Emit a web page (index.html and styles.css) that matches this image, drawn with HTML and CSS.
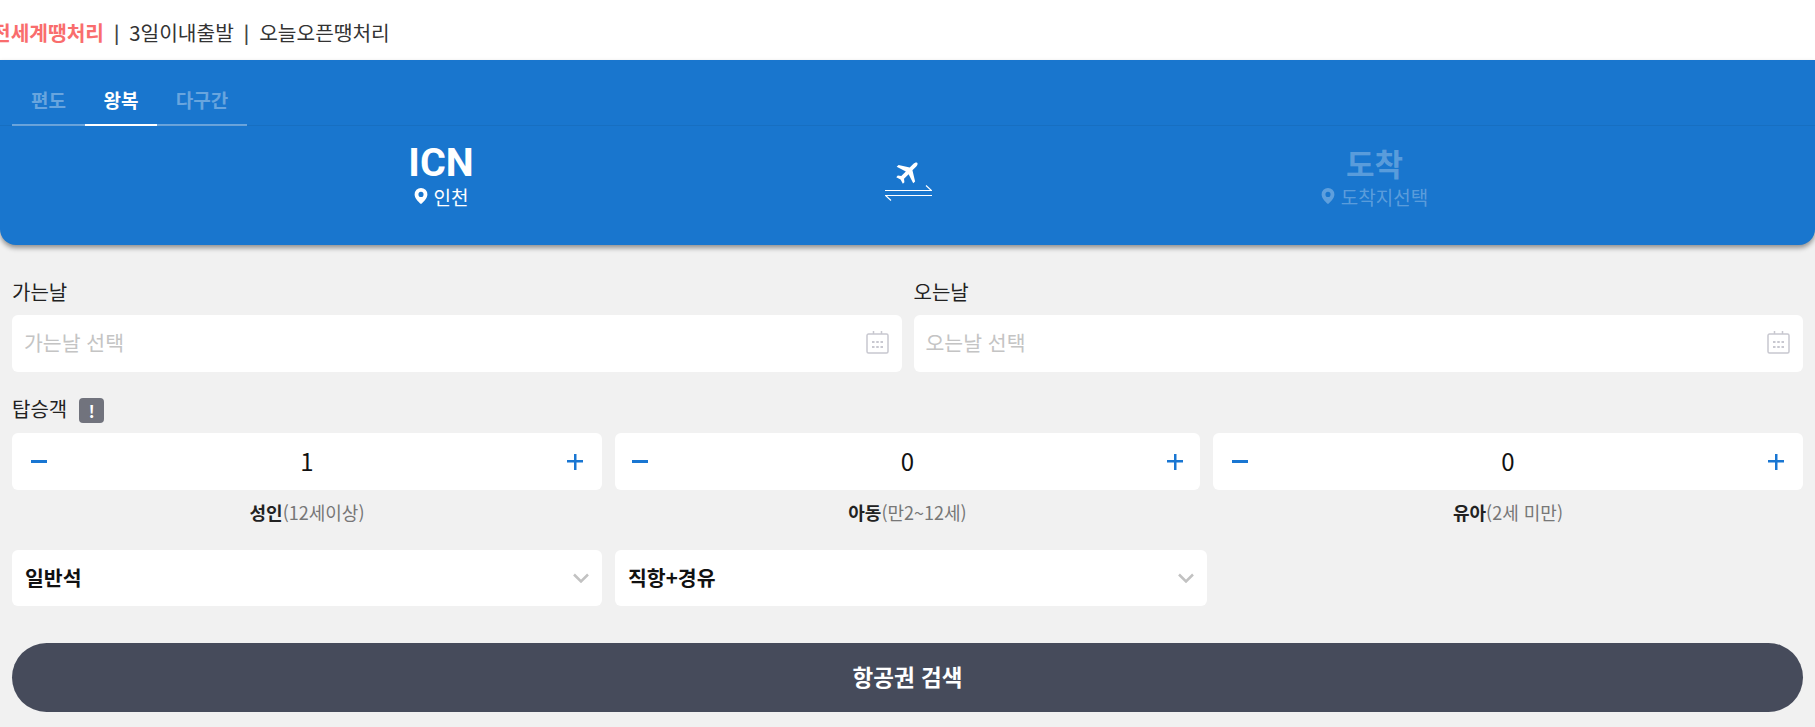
FILE: index.html
```html
<!DOCTYPE html>
<html lang="ko">
<head>
  <meta charset="UTF-8">
  <title>항공권 검색</title>
  <link rel="stylesheet" href="styles.css">
</head>
<body>
  <div class="top-links">
    <a class="hot">전세계땡처리</a>
    <span class="sep">|</span>
    <a>3일이내출발</a>
    <span class="sep">|</span>
    <a>오늘오픈땡처리</a>
  </div>

  <div class="route-panel">
    <div class="tabs">
      <div class="tab tab-oneway">편도</div>
      <div class="tab tab-round active">왕복</div>
      <div class="tab tab-multi">다구간</div>
    </div>
    <div class="route">
      <div class="place">
        <div class="code">ICN</div>
        <div class="city">
          <svg class="pin" viewBox="0 0 12 15"><path fill-rule="evenodd" d="M6 0a6 6 0 0 1 6 6c0 3.400-3.400 6.800-6 9-2.600-2.200-6-5.600-6-9a6 6 0 0 1 6-6zm0 3.600a2.400 2.400 0 1 0 0 4.800 2.400 2.400 0 0 0 0-4.800z"/></svg>
          인천
        </div>
      </div>
      <div class="swap">
        <svg class="plane" viewBox="-12 -12 24 24"><path transform="rotate(45)" d="M0-12c1.200 0 1.800 1.500 1.800 3v5l9 5.500V4l-9-3v6l2.500 2v2L0 9.700-4.300 11V9l2.500-2V1l-9 3V1.500l9-5.500V-9c0-1.500.6-3 1.800-3z"/></svg>
        <svg class="arrows" viewBox="0 0 47 16"><path d="M0 5.500h46.500L41 0.500M47 10.500H0.500L6 15.500"/></svg>
      </div>
      <div class="place empty">
        <div class="code">도착</div>
        <div class="city">
          <svg class="pin" viewBox="0 0 12 15"><path fill-rule="evenodd" d="M6 0a6 6 0 0 1 6 6c0 3.400-3.400 6.800-6 9-2.600-2.200-6-5.600-6-9a6 6 0 0 1 6-6zm0 3.600a2.400 2.400 0 1 0 0 4.800 2.400 2.400 0 0 0 0-4.800z"/></svg>
          도착지선택
        </div>
      </div>
    </div>
  </div>

  <div class="form">
    <div class="dates">
      <div class="date-col">
        <div class="field-label">가는날</div>
        <div class="box date-box">
          <span class="placeholder">가는날 선택</span>
          <svg class="calendar" viewBox="0 0 23 23"><path d="M1 4.500a1.500 1.500 0 0 1 1.500-1.500h18a1.500 1.500 0 0 1 1.500 1.500v16a1.500 1.500 0 0 1-1.500 1.500h-18a1.500 1.500 0 0 1-1.500-1.500zM7.500 0v3M15.500 0v3"/><path class="dots" d="M6 10h2.500v2H6zM10.250 10h2.500v2h-2.500zM14.500 10h2.500v2h-2.500zM6 15h2.500v2H6zM10.250 15h2.500v2h-2.500zM14.500 15h2.500v2h-2.500z"/></svg>
        </div>
      </div>
      <div class="date-col">
        <div class="field-label">오는날</div>
        <div class="box date-box">
          <span class="placeholder">오는날 선택</span>
          <svg class="calendar" viewBox="0 0 23 23"><path d="M1 4.500a1.500 1.500 0 0 1 1.500-1.500h18a1.500 1.500 0 0 1 1.500 1.500v16a1.500 1.500 0 0 1-1.500 1.500h-18a1.500 1.500 0 0 1-1.500-1.500zM7.500 0v3M15.500 0v3"/><path class="dots" d="M6 10h2.500v2H6zM10.250 10h2.500v2h-2.500zM14.500 10h2.500v2h-2.500zM6 15h2.500v2H6zM10.250 15h2.500v2h-2.500zM14.500 15h2.500v2h-2.500z"/></svg>
        </div>
      </div>
    </div>

    <div class="pax-title">
      <span class="field-label">탑승객</span>
      <span class="notice">!</span>
    </div>

    <div class="pax-row">
      <div class="pax">
        <div class="box stepper">
          <span class="minus"></span>
          <span class="count">1</span>
          <span class="plus"></span>
        </div>
        <div class="pax-label"><b>성인</b>(12세이상)</div>
      </div>
      <div class="pax pax-mid">
        <div class="box stepper">
          <span class="minus"></span>
          <span class="count">0</span>
          <span class="plus"></span>
        </div>
        <div class="pax-label"><b>아동</b>(만2~12세)</div>
      </div>
      <div class="pax">
        <div class="box stepper">
          <span class="minus"></span>
          <span class="count">0</span>
          <span class="plus"></span>
        </div>
        <div class="pax-label"><b>유아</b>(2세 미만)</div>
      </div>
    </div>

    <div class="select-row">
      <div class="box select">
        <span class="select-text">일반석</span>
        <svg class="chevron" viewBox="0 0 16 10"><path d="M1 1.500l7 7 7-7"/></svg>
      </div>
      <div class="box select select-wide">
        <span class="select-text">직항+경유</span>
        <svg class="chevron" viewBox="0 0 16 10"><path d="M1 1.500l7 7 7-7"/></svg>
      </div>
    </div>

    <button class="search-btn">항공권 검색</button>
  </div>
</body>
</html>
```

FILE: styles.css
```css
* {
  box-sizing: border-box;
}

html, body {
  height: 727px;
  overflow: hidden;
}

body {
  margin: 0;
  background: #f1f1f1;
  color: #222;
  font-family: "Noto Sans CJK KR", "Noto Sans", sans-serif;
}

.top-links {
  height: 60px;
  background: #fff;
  display: flex;
  align-items: center;
  gap: 10px;
  padding-top: 3px;
  margin-left: -8px;
  font-size: 20.300px;
  color: #333;
}

.top-links .hot {
  color: #f96d6d;
  font-weight: 700;
}

.top-links .sep {
  font-size: 18px;
  font-weight: 700;
  color: #444;
}

.route-panel {
  height: 185px;
  background: #1976ce;
  border-radius: 0 0 16px 16px;
  box-shadow: 0 3px 5px rgba(0,0,0,0.4);
  padding-top: 17px;
}

.tabs {
  display: flex;
  height: 49px;
  padding-left: 12px;
  border-bottom: 1px solid rgba(0,0,0,0.06);
}

.tab {
  height: 49px;
  border-bottom: 2px solid rgba(255,255,255,0.35);
  font-size: 19px;
  font-weight: 700;
  line-height: 45px;
  text-align: center;
  color: rgba(255,255,255,0.35);
}

.tab-oneway { width: 73px; }
.tab-round { width: 72px; }
.tab-multi { width: 90px; }

.tab.active {
  color: #fff;
  border-bottom-color: #fff;
}

.route {
  display: grid;
  grid-template-columns: 858px 76px 857px;
  padding: 0 12px;
}

.place {
  display: flex;
  flex-direction: column;
  align-items: center;
  color: #fff;
  padding-top: 16px;
}

.place.empty {
  color: rgba(255,255,255,0.3);
}

.code {
  height: 41px;
  font-family: Roboto, sans-serif;
  font-size: 39.500px;
  font-weight: 700;
  line-height: 41px;
}

.place.empty .code {
  font-family: "Noto Sans CJK KR", sans-serif;
  font-size: 31px;
  font-weight: 700;
}

.city {
  display: flex;
  align-items: center;
  gap: 6px;
  height: 26px;
  font-size: 19px;
}

.pin {
  width: 14px;
  height: 16px;
  fill: currentColor;
}

.swap {
  display: flex;
  flex-direction: column;
  align-items: center;
  padding-top: 33px;
}

.plane {
  width: 26px;
  height: 26px;
  fill: #fff;
}

.arrows {
  width: 47px;
  height: 16px;
  fill: none;
  stroke: #fff;
  stroke-width: 1.200;
}

.form {
  padding: 32px 12px 0;
}

.dates {
  display: flex;
  gap: 12px;
}

.date-col {
  flex: 1;
}

.field-label {
  font-size: 20px;
  line-height: 30px;
  color: #222;
}

.date-col .field-label {
  margin-bottom: 8px;
}

.box {
  background: #fff;
  border-radius: 6px;
  display: flex;
  align-items: center;
}

.date-box {
  height: 57px;
  justify-content: space-between;
  padding: 0 13px 2px 12px;
}

.placeholder {
  padding-bottom: 2px;
  font-size: 20.500px;
  color: #c4c4c4;
}

.calendar {
  width: 23px;
  height: 23px;
  fill: none;
  stroke: #c8c8d0;
  stroke-width: 1.500;
}

.calendar .dots {
  fill: #c8c8d0;
  stroke: none;
}

.pax-title {
  display: flex;
  align-items: center;
  gap: 12px;
  height: 30px;
  margin-top: 23px;
  margin-bottom: 8px;
}

.pax-title .field-label {
  line-height: 28px;
  height: 30px;
}

.notice {
  width: 25px;
  height: 25px;
  border-radius: 4px;
  background: #71737d;
  color: #fff;
  font-size: 17px;
  font-weight: 700;
  line-height: 25px;
  text-align: center;
}

.pax-row {
  display: flex;
  gap: 13px;
}

.pax {
  width: 590px;
}

.pax-mid {
  width: 585px;
}

.stepper {
  height: 57px;
  justify-content: space-between;
  padding: 0 19px;
}

.pax-mid .stepper {
  padding: 0 17px;
}

.minus {
  width: 16px;
  height: 3px;
  background: #1976d2;
}

.plus {
  width: 16px;
  height: 16px;
  background: linear-gradient(#1976d2, #1976d2) center / 100% 2.500px no-repeat,
    linear-gradient(#1976d2, #1976d2) center / 2.500px 100% no-repeat;
}

.count {
  padding-bottom: 2px;
  font-size: 24px;
  color: #111;
}

.pax-label {
  height: 46px;
  font-size: 18px;
  line-height: 44px;
  text-align: center;
  color: #777;
}

.pax-label b {
  font-weight: 700;
  color: #222;
}

.select-row {
  display: flex;
  gap: 13px;
  margin-top: 14px;
}

.select {
  width: 590px;
  height: 56px;
  justify-content: space-between;
  padding: 0 13px;
  font-size: 20.500px;
  font-weight: 700;
  color: #111;
}

.select-text {
  padding-bottom: 3px;
}

.select-wide {
  width: 592px;
}

.chevron {
  width: 16px;
  height: 10px;
  fill: none;
  stroke: #c2c2c2;
  stroke-width: 2.500;
}

.search-btn {
  display: block;
  width: 100%;
  height: 69px;
  margin-top: 37px;
  padding: 0 0 4px;
  border: 0;
  border-radius: 35px;
  background: #464b5b;
  color: #fff;
  font-family: inherit;
  font-size: 22.500px;
  font-weight: 700;
}
```
